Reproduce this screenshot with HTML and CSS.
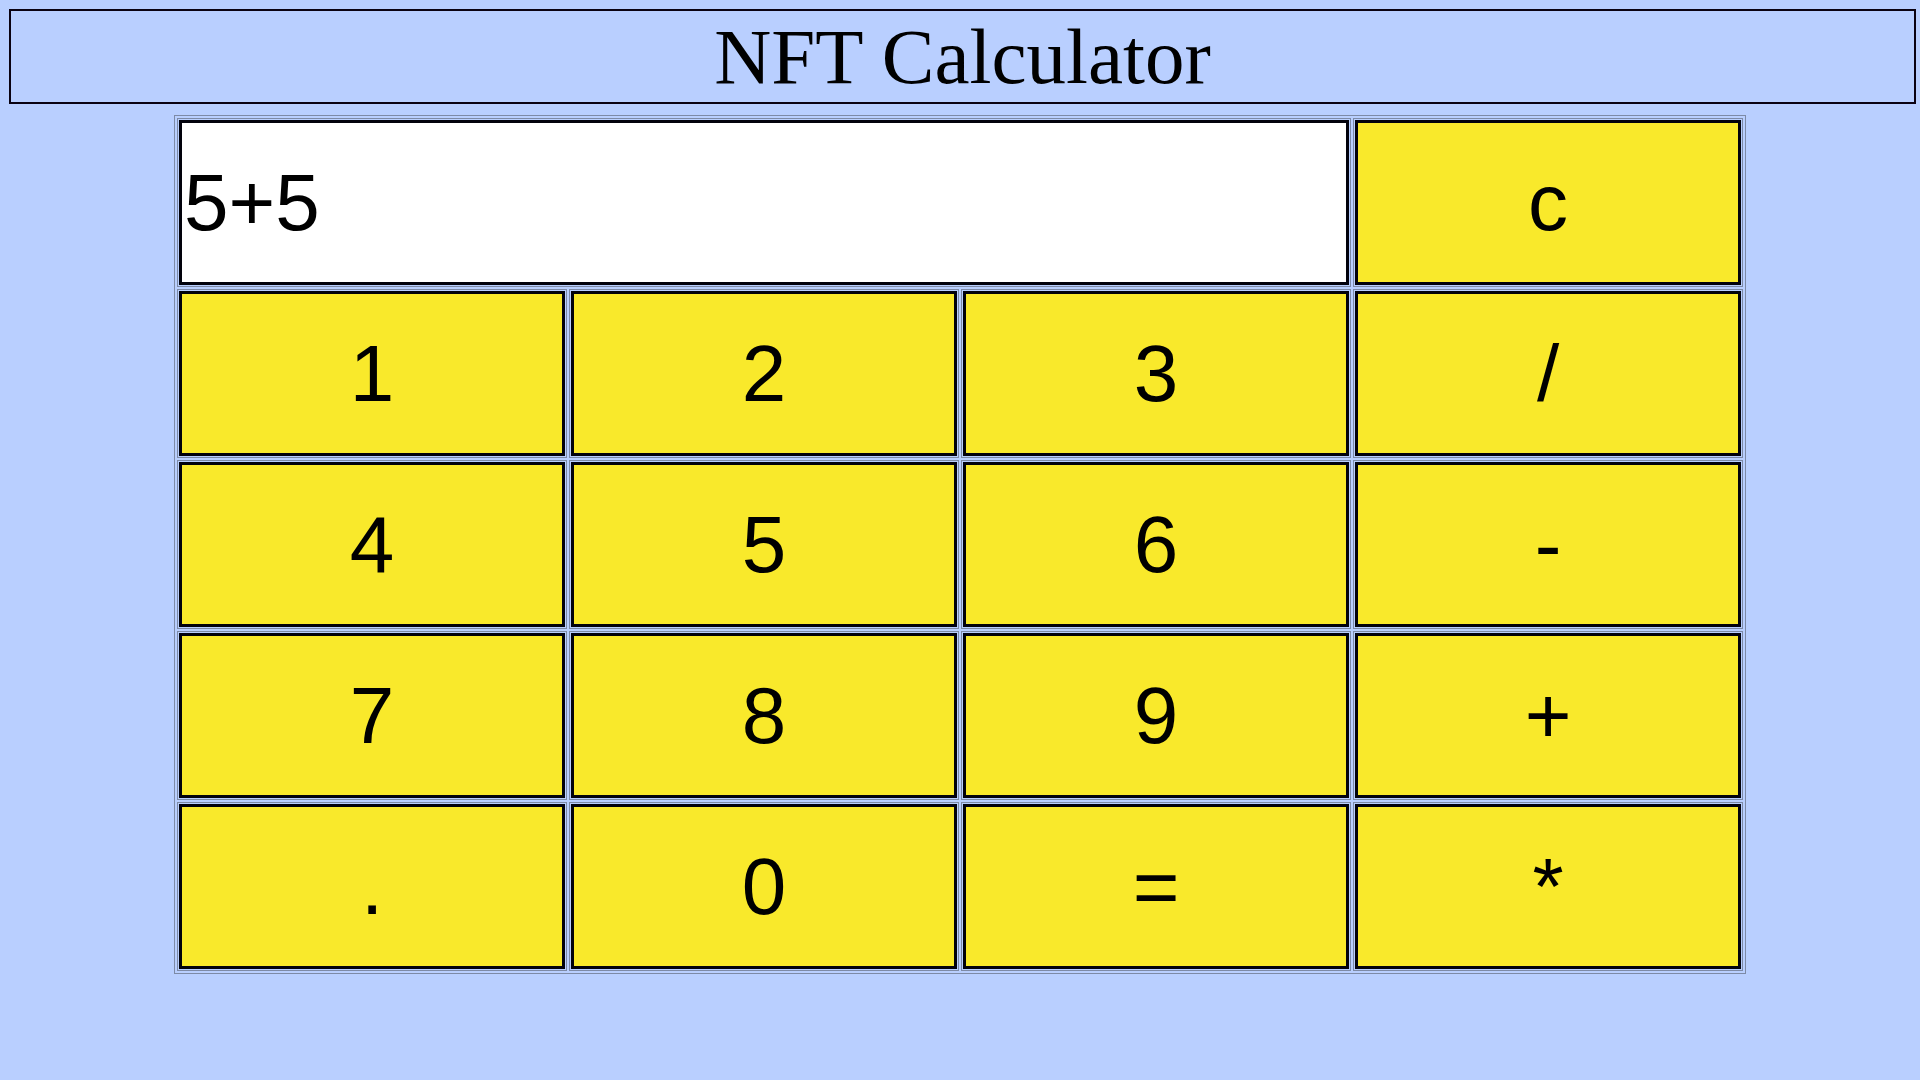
FILE: index.html
```html
<!DOCTYPE html>
<html lang="en">
<head>
<meta charset="utf-8">
<title>NFT Calculator</title>
<link rel="stylesheet" href="styles.css">
</head>
<body>
<h1 class="title">NFT Calculator</h1>
<table class="calc">
  <tr>
    <td colspan="3"><input class="display" type="text" value="5+5" readonly></td>
    <td><button class="key">c</button></td>
  </tr>
  <tr>
    <td><button class="key">1</button></td>
    <td><button class="key">2</button></td>
    <td><button class="key">3</button></td>
    <td><button class="key">/</button></td>
  </tr>
  <tr>
    <td><button class="key">4</button></td>
    <td><button class="key">5</button></td>
    <td><button class="key">6</button></td>
    <td><button class="key">-</button></td>
  </tr>
  <tr>
    <td><button class="key">7</button></td>
    <td><button class="key">8</button></td>
    <td><button class="key">9</button></td>
    <td><button class="key">+</button></td>
  </tr>
  <tr>
    <td><button class="key">.</button></td>
    <td><button class="key">0</button></td>
    <td><button class="key">=</button></td>
    <td><button class="key">*</button></td>
  </tr>
</table>
</body>
</html>
```
FILE: styles.css
```css
html, body {
  background: #b9cfff;
}
body {
  margin: 0;
  padding: 9px 0 0;
}
.title {
  margin: 0 4px 0 9px;
  border: 2px solid #0a0212;
  font-family: "Liberation Serif", "Times New Roman", serif;
  font-weight: normal;
  font-size: 79px;
  line-height: 91px;
  text-align: center;
  color: #000;
}
.calc {
  margin: 11px auto 0;
  border: 1px solid #7d8aa6;
  border-collapse: separate;
  border-spacing: 2px;
}
.calc td {
  border: 1px solid #7d8aa6;
  padding: 1px;
}
.key, .display {
  display: block;
  box-sizing: border-box;
  height: 165px;
  border: 3px solid #02020c;
  margin: 0;
  font-family: "Liberation Sans", Arial, sans-serif;
  font-size: 80px;
  color: #000;
  border-radius: 0;
}
.key {
  width: 386px;
  background: #f9e92b;
  padding: 0;
  text-align: center;
}
.display {
  width: 1170px;
  background: #fff;
  padding: 0 2px;
  text-align: left;
  outline: none;
}
```
